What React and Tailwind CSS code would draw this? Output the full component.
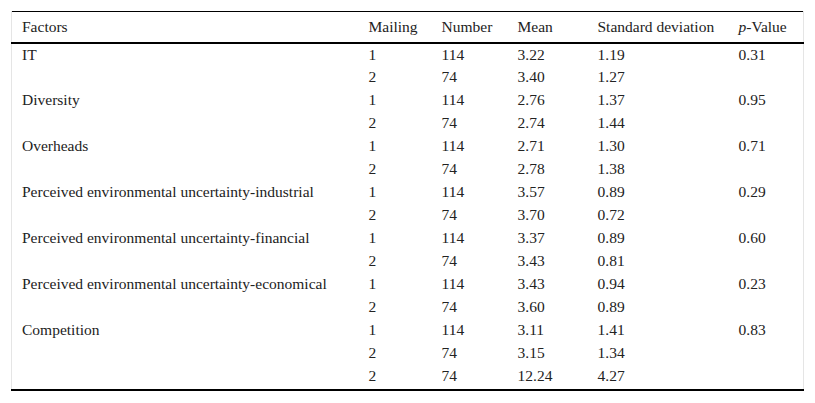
const rows = [
  ["IT", "1", "114", "3.22", "1.19", "0.31"],
  ["", "2", "74", "3.40", "1.27", ""],
  ["Diversity", "1", "114", "2.76", "1.37", "0.95"],
  ["", "2", "74", "2.74", "1.44", ""],
  ["Overheads", "1", "114", "2.71", "1.30", "0.71"],
  ["", "2", "74", "2.78", "1.38", ""],
  ["Perceived environmental uncertainty-industrial", "1", "114", "3.57", "0.89", "0.29"],
  ["", "2", "74", "3.70", "0.72", ""],
  ["Perceived environmental uncertainty-financial", "1", "114", "3.37", "0.89", "0.60"],
  ["", "2", "74", "3.43", "0.81", ""],
  ["Perceived environmental uncertainty-economical", "1", "114", "3.43", "0.94", "0.23"],
  ["", "2", "74", "3.60", "0.89", ""],
  ["Competition", "1", "114", "3.11", "1.41", "0.83"],
  ["", "2", "74", "3.15", "1.34", ""],
  ["", "2", "74", "12.24", "4.27", ""],
]

export default function App() {
  return (
    <div className="w-[815px] h-[403px] bg-white pt-[11px] px-[11px] [font-family:'Liberation_Serif',serif] text-[15.5px] text-[#222]">
      <table className="w-[793px] border-collapse table-fixed">
        <colgroup>
          <col className="w-[357px]" />
          <col className="w-[73px]" />
          <col className="w-[76px]" />
          <col className="w-[80px]" />
          <col className="w-[141px]" />
          <col />
        </colgroup>
        <thead>
          <tr className="border-t border-black border-b-2 h-[31px] leading-[20px]">
            <th className="text-left font-normal pl-[10px] pt-[1px] border-l border-[#e5e5e5]">Factors</th>
            <th className="text-left font-normal pt-[1px]">Mailing</th>
            <th className="text-left font-normal pt-[1px]">Number</th>
            <th className="text-left font-normal pt-[1px]">Mean</th>
            <th className="text-left font-normal pt-[1px]">Standard deviation</th>
            <th className="text-left font-normal pt-[1px] border-r border-[#e5e5e5]"><i>p</i>-Value</th>
          </tr>
        </thead>
        <tbody className="border-b-2 border-black">
          {rows.map((r, i) => (
            <tr
              key={i}
              className={
                i === rows.length - 1
                  ? "h-[25px] leading-[21px] [&>td]:pt-0 [&>td]:pb-[2px] [&>td]:align-top"
                  : "h-[23px] leading-[21px] [&>td]:pt-0 [&>td]:align-top"
              }
            >
              <td className="pl-[10px] border-l border-[#e5e5e5] whitespace-nowrap">{r[0]}</td>
              <td>{r[1]}</td>
              <td>{r[2]}</td>
              <td>{r[3]}</td>
              <td>{r[4]}</td>
              <td className="border-r border-[#e5e5e5]">{r[5]}</td>
            </tr>
          ))}
        </tbody>
      </table>
    </div>
  )
}
